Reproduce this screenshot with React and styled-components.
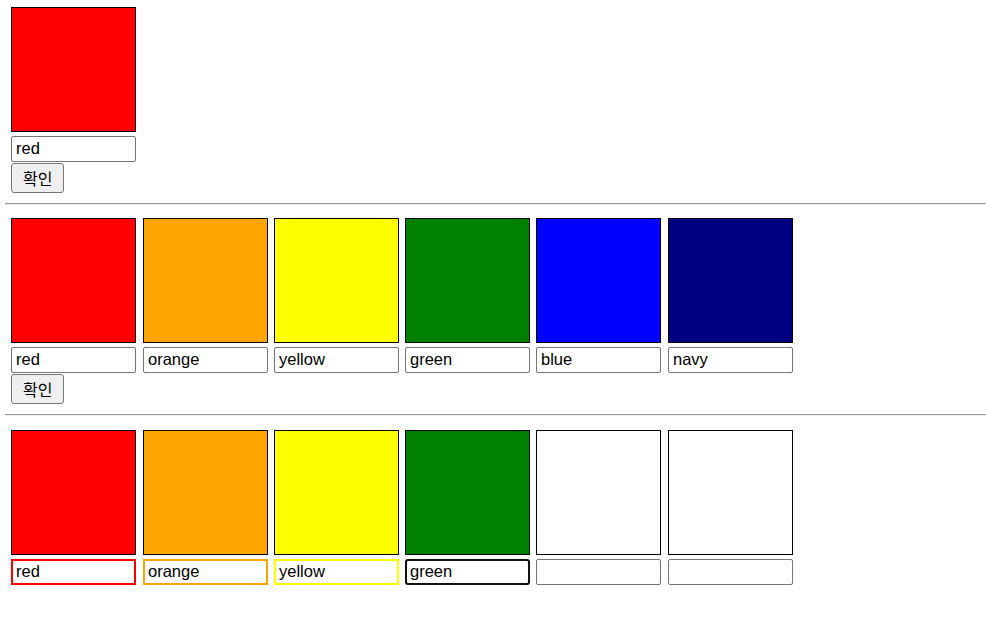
import React from "react";
import styled, { createGlobalStyle } from "styled-components";

const GlobalStyle = createGlobalStyle`
  body {
    margin: 0;
    background: #fff;
    font-family: "Liberation Sans", Arial, sans-serif;
  }
`;

const colors1 = ["red"];
const colors2 = ["red", "orange", "yellow", "green", "blue", "navy"];
const colors3 = [
  { fill: "red", value: "red" },
  { fill: "orange", value: "orange" },
  { fill: "yellow", value: "yellow" },
  { fill: "green", value: "green", focused: true },
  { fill: "white", value: "" },
  { fill: "white", value: "" },
];

// the columns sit 131 or 132px apart in the original
const wide = (i) => i === 1 || i === 5;

const App = () => {
  return (
    <Page>
      <GlobalStyle />
      <Section>
        <Row>
          {colors1.map((c, i) => (
            <Column key={i} $wide={wide(i)}>
              <Box $color={c} />
              <TextInput defaultValue={c} readOnly />
            </Column>
          ))}
        </Row>
        <ConfirmButton>확인</ConfirmButton>
      </Section>
      <Divider $after={13} />
      <Section>
        <Row>
          {colors2.map((c, i) => (
            <Column key={i} $wide={wide(i)}>
              <Box $color={c} />
              <TextInput defaultValue={c} readOnly />
            </Column>
          ))}
        </Row>
        <ConfirmButton>확인</ConfirmButton>
      </Section>
      <Divider $after={14} />
      <Section>
        <Row>
          {colors3.map((c, i) => (
            <Column key={i} $wide={wide(i)}>
              <Box $color={c.fill} />
              {c.focused ? (
                <FocusedInput defaultValue={c.value} readOnly />
              ) : c.value ? (
                <ColorInput $color={c.fill} defaultValue={c.value} readOnly />
              ) : (
                <TextInput defaultValue="" readOnly />
              )}
            </Column>
          ))}
        </Row>
      </Section>
    </Page>
  );
};

export default App;

const Page = styled.div`
  padding: 7px 0 0 5px;
`;

const Section = styled.div`
  display: flex;
  flex-direction: column;
  align-items: flex-start;
  padding-left: 6px;
`;

const Row = styled.div`
  display: flex;
  gap: 6px;
`;

const Column = styled.div`
  display: flex;
  flex-direction: column;
  gap: 4px;
  margin-left: ${(p) => (p.$wide ? "1px" : "0")};
`;

const Box = styled.div`
  width: 123px;
  height: 123px;
  border: 1px solid #000;
  background: ${(p) => p.$color};
`;

const TextInput = styled.input`
  box-sizing: border-box;
  width: 125px;
  height: 26px;
  margin: 0;
  padding: 0 4px 1px;
  border: 1px solid #767676;
  border-radius: 2px;
  font-family: "Liberation Sans", Arial, sans-serif;
  font-size: 16.5px;
  color: #000;
  background: #fff;
  outline: none;
`;

const ColorInput = styled(TextInput)`
  border: 2px solid ${(p) => p.$color};
  border-radius: 0;
  padding: 0 3px 1px;
`;

const FocusedInput = styled(TextInput)`
  border: 2px solid #101010;
  border-radius: 3px;
  padding: 0 3px 1px;
`;

const ConfirmButton = styled.button`
  margin-top: 1px;
  height: 30px;
  padding: 0 11px;
  background: #efefef;
  border: 1px solid #767676;
  border-radius: 3px;
  font-family: "Noto Sans CJK KR", sans-serif;
  font-size: 16px;
  color: #000;
`;

const Divider = styled.hr`
  margin: 10px 0 ${(p) => p.$after}px 0;
  border: none;
  border-top: 1px solid #9a9a9a;
  border-bottom: 1px solid #eeeeee;
  height: 0;
`;
